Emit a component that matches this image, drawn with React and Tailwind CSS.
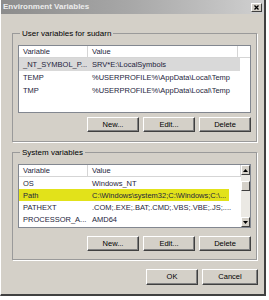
import React from "react";

const userVars = [
  { name: "_NT_SYMBOL_P...", value: "SRV*E:\\LocalSymbols", selected: true },
  { name: "TEMP", value: "%USERPROFILE%\\AppData\\Local\\Temp" },
  { name: "TMP", value: "%USERPROFILE%\\AppData\\Local\\Temp" },
];

const systemVars = [
  { name: "OS", value: "Windows_NT" },
  { name: "Path", value: "C:\\Windows\\system32;C:\\Windows;C:\\...", marked: true },
  { name: "PATHEXT", value: ".COM;.EXE;.BAT;.CMD;.VBS;.VBE;.JS;...." },
  { name: "PROCESSOR_A...", value: "AMD64" },
];

function Button({ children, className = "" }) {
  return (
    <button
      className={
        "h-[15px] w-[52px] flex items-center justify-center bg-[#d4d0c8] border border-t-white border-l-white border-r-[#404040] border-b-[#404040] shadow-[inset_-1px_-1px_0_#808080] text-[7.5px] text-black " +
        className
      }
    >
      {children}
    </button>
  );
}

function Header({ rightPad }) {
  return (
    <div className="flex h-[12px] border-b border-[#d5d5d5] text-[#1e1e3c]">
      <div className="w-[69px] pl-[4px] flex items-center border-r border-[#d5d5d5]">
        Variable
      </div>
      <div className="flex-1 pl-[4px] flex items-center border-r border-[#d5d5d5]">
        Value
      </div>
      <div className={rightPad}></div>
    </div>
  );
}

function ScrollArrow({ up }) {
  return (
    <div className="h-[10px] w-[9px] bg-[#d4d0c8] border border-t-white border-l-white border-r-[#404040] border-b-[#404040] flex items-center justify-center">
      <svg width="5" height="3" viewBox="0 0 5 3">
        {up ? <path d="M2.5 0 L5 3 L0 3 Z" fill="#000" /> : <path d="M0 0 L5 0 L2.5 3 Z" fill="#000" />}
      </svg>
    </div>
  );
}

export default function App() {
  return (
    <div className="w-[269px] h-[300px] bg-white font-['Liberation_Sans',Arial,sans-serif] text-[7.5px] leading-none">
      <div className="w-[266px] h-[296px] bg-[#d4d0c8] border-l border-l-white border-r-2 border-r-[#404040] border-b-2 border-b-[#404040] flex flex-col">
        {/* Title bar */}
        <div className="h-[14px] flex items-center justify-between bg-gradient-to-r from-[#8c8c8c] via-[#a8a8a8] to-[#d0d0d0] pl-[2px] pr-[2px]">
          <span className="font-bold text-[8px] text-[#ececec]">Environment Variables</span>
          <div className="w-[11px] h-[9px] bg-[#d4d0c8] border border-t-white border-l-white border-r-[#404040] border-b-[#404040] flex items-center justify-center">
            <svg width="5" height="5" viewBox="0 0 5 5">
              <path d="M0.5 0.5 L4.5 4.5 M4.5 0.5 L0.5 4.5" stroke="#000" strokeWidth="1.3" />
            </svg>
          </div>
        </div>

        {/* User variables */}
        <fieldset className="ml-[11px] mt-[15px] w-[245px] border border-[#9a9a9a] shadow-[1px_1px_0_white] px-[5px] pb-[9px]">
          <legend className="ml-[2px] px-[2px] text-[8px] leading-[9px] text-black">
            User variables for sudarn
          </legend>
          <div className="mt-[7px] h-[68px] w-[233px] bg-white border border-[#828790] text-[#1e1e3c]">
            <Header rightPad="w-[12px]" />
            {userVars.map((v) => (
              <div
                key={v.name}
                className={"flex h-[13px] items-center leading-[11px] w-[221px] " + (v.selected ? "bg-[#d9d9d9]" : "")}
              >
                <div className="w-[69px] pl-[4px] truncate">{v.name}</div>
                <div className="flex-1 pl-[4px] truncate">{v.value}</div>
              </div>
            ))}
          </div>
          <div className="mt-[4px] flex justify-end gap-[4px]">
            <Button>New...</Button>
            <Button>Edit...</Button>
            <Button>Delete</Button>
          </div>
        </fieldset>

        {/* System variables */}
        <fieldset className="ml-[11px] mt-[6px] w-[245px] border border-[#9a9a9a] shadow-[1px_1px_0_white] px-[5px] pb-[8px]">
          <legend className="ml-[2px] px-[2px] text-[8px] leading-[9px] text-black">
            System variables
          </legend>
          <div className="mt-[7px] h-[64px] w-[233px] bg-white border border-[#828790] text-[#1e1e3c] flex">
            <div className="flex-1 min-w-0">
              <Header rightPad="" />
              {systemVars.map((v) => (
                <div key={v.name} className="flex h-[12px] items-center leading-[11px]">
                  <div className={"flex h-full items-center " + (v.marked ? "bg-[#e2e21a] w-[210px]" : "w-full")}>
                    <div className="w-[69px] shrink-0 pl-[4px] truncate">{v.name}</div>
                    <div className="flex-1 pl-[4px] truncate whitespace-nowrap">{v.value}</div>
                  </div>
                </div>
              ))}
            </div>
            <div className="w-[9px] flex flex-col bg-[#ebe9e4]">
              <ScrollArrow up />
              <div className="mt-[6px] h-[10px] w-[9px] bg-[#d4d0c8] border border-t-white border-l-white border-r-[#404040] border-b-[#404040]"></div>
              <div className="flex-1"></div>
              <ScrollArrow />
            </div>
          </div>
          <div className="mt-[8px] flex justify-end gap-[4px]">
            <Button>New...</Button>
            <Button>Edit...</Button>
            <Button>Delete</Button>
          </div>
        </fieldset>

        {/* OK / Cancel */}
        <div className="mt-[9px] flex justify-end gap-[4px] pr-[6px]">
          <Button className="h-[16px] w-[52px]">OK</Button>
          <Button className="h-[16px] w-[56px]">Cancel</Button>
        </div>
      </div>
    </div>
  );
}
